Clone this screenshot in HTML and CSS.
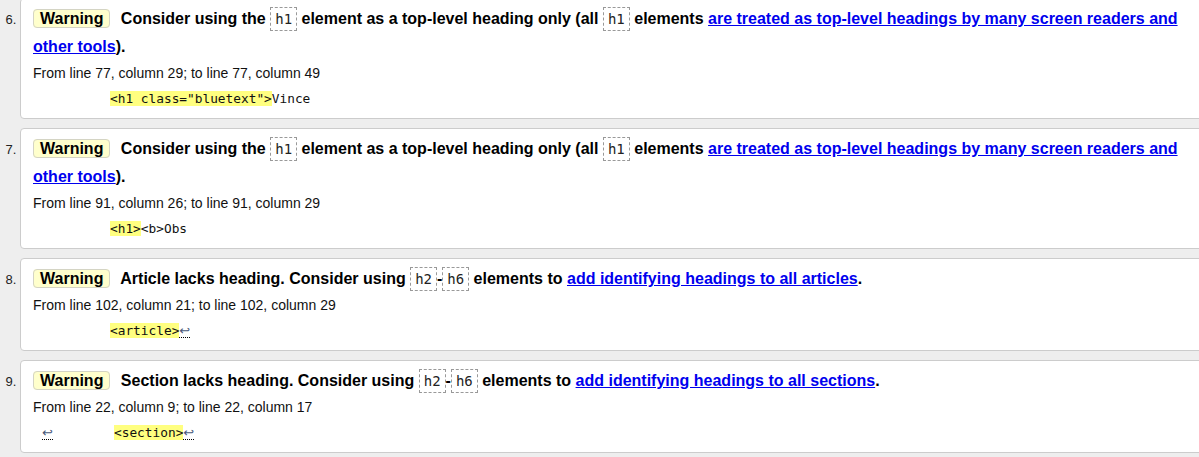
FILE: index.html
```html
<!DOCTYPE html>
<html lang="en">
<head>
<meta charset="utf-8">
<title>Validator messages</title>
<link rel="stylesheet" href="styles.css">
</head>
<body>
<ol class="messages" start="6">
  <li class="msg">
    <p class="text"><strong class="badge">Warning</strong> <span>Consider using the <code>h1</code> element as a top-level heading only (all <code>h1</code> elements <a href="#">are treated as top-level headings by many screen readers and other tools</a>).</span></p>
    <p class="location">From line 77, column 29; to line 77, column 49</p>
    <p class="extract"><code><span class="indent"></span><b>&lt;h1 class="bluetext"&gt;</b>Vince</code></p>
  </li>
  <li class="msg">
    <p class="text"><strong class="badge">Warning</strong> <span>Consider using the <code>h1</code> element as a top-level heading only (all <code>h1</code> elements <a href="#">are treated as top-level headings by many screen readers and other tools</a>).</span></p>
    <p class="location">From line 91, column 26; to line 91, column 29</p>
    <p class="extract"><code><span class="indent"></span><b>&lt;h1&gt;</b>&lt;b&gt;Obs</code></p>
  </li>
  <li class="msg">
    <p class="text"><strong class="badge">Warning</strong> <span>Article lacks heading. Consider using <code>h2</code>-<code>h6</code> elements to <a href="#">add identifying headings to all articles</a>.</span></p>
    <p class="location">From line 102, column 21; to line 102, column 29</p>
    <p class="extract"><code><span class="indent"></span><b>&lt;article&gt;</b><span class="lf">↩</span></code></p>
  </li>
  <li class="msg">
    <p class="text"><strong class="badge">Warning</strong> <span>Section lacks heading. Consider using <code>h2</code>-<code>h6</code> elements to <a href="#">add identifying headings to all sections</a>.</span></p>
    <p class="location">From line 22, column 9; to line 22, column 17</p>
    <p class="extract"><code><span class="lf">↩</span><span class="indent short"></span><b>&lt;section&gt;</b><span class="lf">↩</span></code></p>
  </li>
</ol>
</body>
</html>
```

FILE: styles.css
```css
html {
  overflow: hidden;
}

body {
  margin: 0;
  background: #eeeeee;
  font-family: "Liberation Sans", Arial, sans-serif;
  color: #000;
}

.messages {
  list-style: decimal outside;
  margin: -2px -9px 0 0;
  padding: 0 0 0 20px;
}

.msg {
  background: #fff;
  border: 1px solid #cccccc;
  border-radius: 4px;
  padding: 6px 12px 9px;
  margin-bottom: 9px;
  font-size: 13px;
}

.msg::marker {
  color: #222;
  font-size: 13px;
}

.text {
  margin: 0;
  font-size: 16px;
  font-weight: bold;
  line-height: 28px;
}

.badge {
  background: #ffffcc;
  border: 1px solid #d4d4c4;
  border-radius: 4px;
  padding: 0 6px;
  margin-right: 6px;
}

.text code {
  font-family: "DejaVu Sans Mono", monospace;
  font-size: 14px;
  font-weight: normal;
  color: #222;
  border: 1px dashed #999;
  padding: 3px 4px;
}

.text a {
  color: #0000ee;
}

.location {
  margin: 2px 0 0;
  font-size: 14px;
  line-height: 20px;
  color: #111;
}

.extract {
  margin: 6px 0 0;
  line-height: 20px;
  padding-left: 9px;
}

.extract code {
  font-family: "DejaVu Sans Mono", monospace;
  font-size: 12.8px;
  white-space: pre;
  color: #111;
}

.extract b {
  font-weight: normal;
  background: #ffff80;
}

.indent {
  display: inline-block;
  width: 68px;
}

.indent.short {
  width: 61px;
}

.lf {
  display: inline-block;
  width: 11px;
  line-height: 13px;
  border-bottom: 1px dotted #000;
  font-family: "DejaVu Sans", sans-serif;
  font-size: 13px;
  color: #4a5a7a;
  text-align: left;
}
```
